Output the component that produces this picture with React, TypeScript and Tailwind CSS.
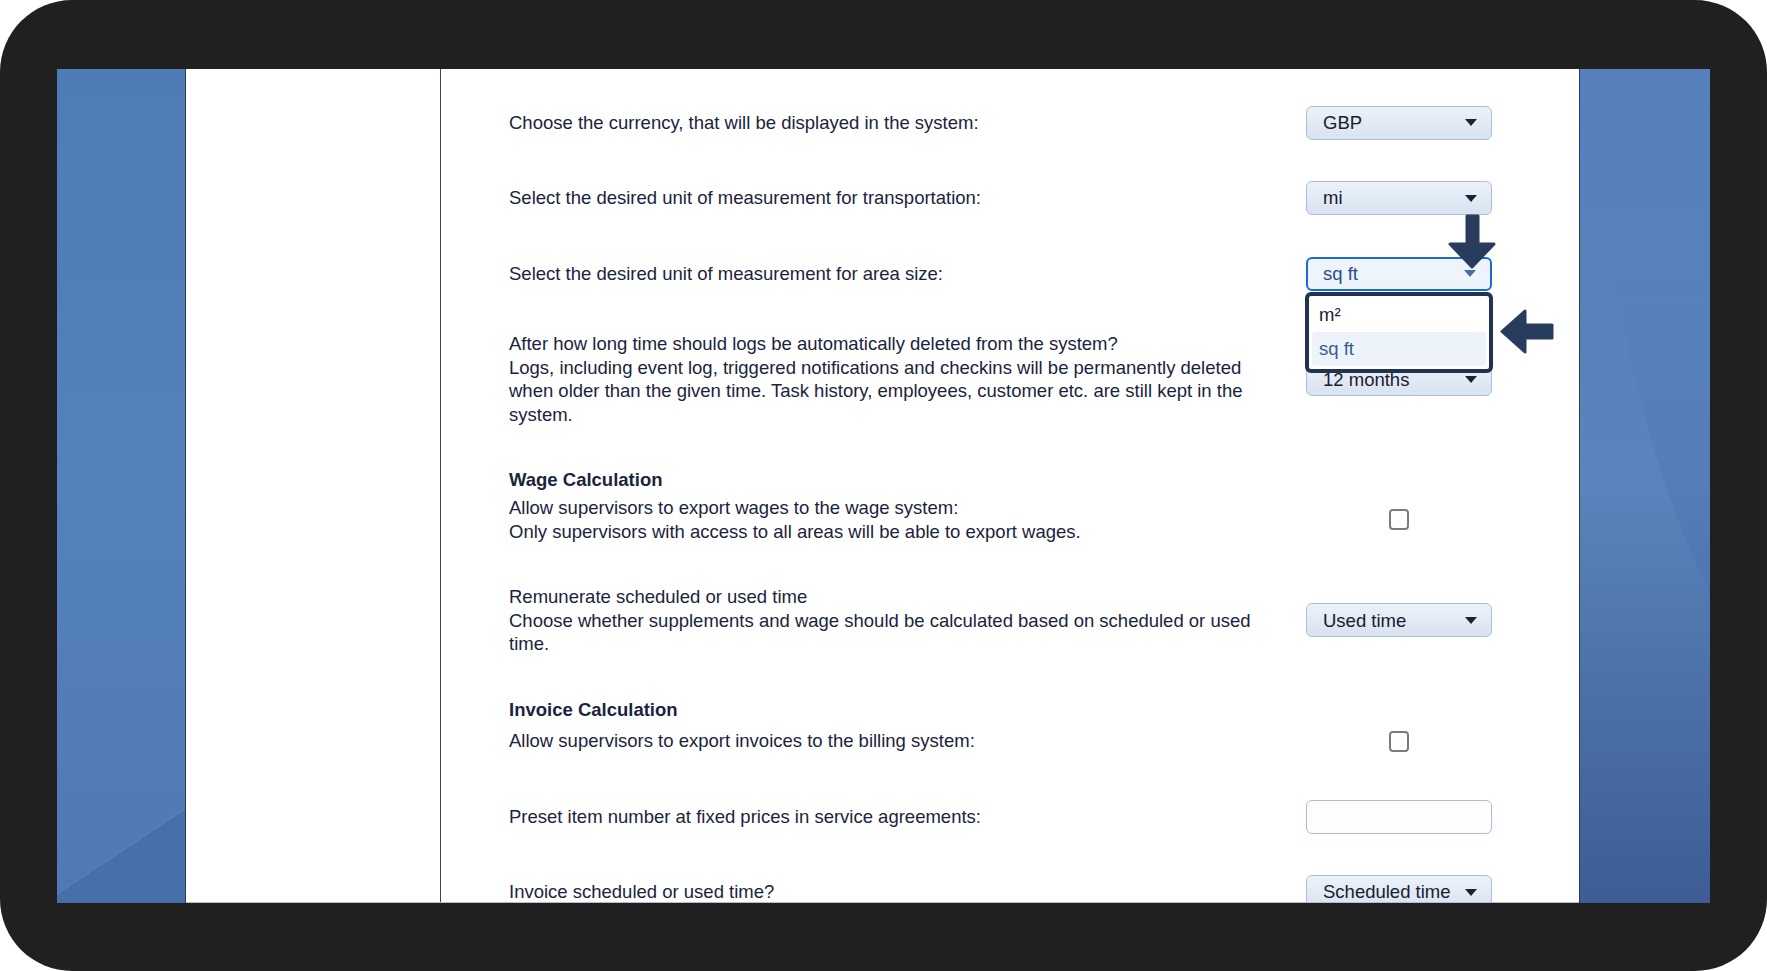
import type { ReactNode } from "react";
import clsx from "clsx";

// Settings form shown inside a tablet-style bezel, with the area-size select opened.

function Caret({ className }: { className: string }) {
  return (
    <svg width="12" height="7" viewBox="0 0 12 7" className={className}>
      <path d="M0 0h12L6 7z" />
    </svg>
  );
}

function Select({ value, focused = false }: { value: string; focused?: boolean }) {
  return (
    <div
      className={clsx(
        "flex h-[34px] w-[186px] shrink-0 items-center justify-between whitespace-nowrap rounded-[6px] pr-[14px]",
        focused
          ? "border-2 border-[#1d6ad6] bg-[#eef4fc] pl-[15px] text-[#2c4d86]"
          : "border border-[#a8bfe2] bg-linear-to-b from-[#ecf2f9] to-[#d8e3f1] pl-[16px] text-[#18202f]",
      )}
    >
      <span>{value}</span>
      <Caret className={focused ? "fill-[#4d6c9f]" : "fill-[#1b2233]"} />
    </div>
  );
}

function Checkbox() {
  return <span className="block h-[21px] w-[20px] rounded-[4px] border-2 border-[#7b7b7b] bg-white" />;
}

function Row({ label, children }: { label: ReactNode; children: ReactNode }) {
  return (
    <div className="flex min-h-[34px] shrink-0 items-center">
      <div className="w-[757px] shrink-0">{label}</div>
      <div className="ml-[40px] flex w-[186px] shrink-0 justify-center">{children}</div>
    </div>
  );
}

function Section({ title, children, className }: { title: string; children: ReactNode; className?: string }) {
  return (
    <div className={clsx("flex shrink-0 flex-col", className)}>
      <h3 className="font-bold">{title}</h3>
      {children}
    </div>
  );
}

// open list under the area select, plus the two pointer arrows
function AreaSelect() {
  return (
    <div className="relative">
      <Select value="sq ft" focused />
      <svg
        width="48"
        height="55"
        viewBox="0 0 48 55"
        className="absolute left-[142px] top-[-43px] fill-[#283d5d] stroke-[#283d5d]"
      >
        <path d="M19 2H30V30H46L24 53L2 30H19Z" strokeWidth="3" strokeLinejoin="round" />
      </svg>
      <div className="absolute left-[-1px] top-[35px] z-10 flex w-[188px] flex-col rounded-[6px] border-4 border-[#213350] bg-white px-[3px] pb-[3px] pt-[2px]">
        <div className="flex h-[34px] items-center pl-[7px] text-[#18202f]">m²</div>
        <div className="flex h-[34px] items-center rounded-[4px] bg-[#edf3fb] pl-[7px] text-[#3c5b92]">sq ft</div>
      </div>
      <svg
        width="54"
        height="45"
        viewBox="0 0 54 45"
        className="absolute left-[194px] top-[52px] fill-[#283d5d] stroke-[#283d5d]"
      >
        <path d="M2 22.5L25 2V16H52V29H25V43Z" strokeWidth="3" strokeLinejoin="round" />
      </svg>
    </div>
  );
}

export default function App() {
  return (
    <div className="h-[971px] w-[1767px] bg-white">
      <div className="h-full w-full rounded-[72px] bg-[#212021] px-[57px] pb-[68px] pt-[69px]">
        <div className="flex h-full">
          {/* wallpaper strip, left */}
          <div className="relative w-[129px] shrink-0 overflow-hidden border-r border-[#2b3b57] bg-linear-to-b from-[#4f7bb6] via-[#5582bb] to-[#5079b3]">
            <svg className="absolute inset-0 h-full w-full" viewBox="0 0 129 834" preserveAspectRatio="none">
              <path d="M0 825L129 740V834H0Z" fill="#4670aa" />
              <path d="M0 825L129 740" stroke="#6a90c4" strokeWidth="1" opacity="0.6" />
            </svg>
          </div>

          <div className="flex w-[1393px] shrink-0 overflow-hidden border-b border-[#b9bcc2] bg-white">
            <div className="w-[255px] shrink-0 border-r border-[#3b4657]" />
            <div className="flex flex-col gap-[41.5px] pl-[68px] pt-[36.5px] text-[18.5px] leading-[23.7px] text-[#1a243d] [font-family:'Liberation_Sans',Arial,sans-serif]">
              <Row label="Choose the currency, that will be displayed in the system:">
                <Select value="GBP" />
              </Row>
              <Row label="Select the desired unit of measurement for transportation:">
                <Select value="mi" />
              </Row>
              <Row label="Select the desired unit of measurement for area size:">
                <AreaSelect />
              </Row>
              <Row
                label={
                  <>
                    <p>After how long time should logs be automatically deleted from the system?</p>
                    <p>
                      Logs, including event log, triggered notifications and checkins will be permanently deleted
                      when older than the given time. Task history, employees, customer etc. are still kept in the
                      system.
                    </p>
                  </>
                }
              >
                <Select value="12 months" />
              </Row>
              <Section className="gap-[4px]" title="Wage Calculation">
                <Row
                  label={
                    <>
                      <p>Allow supervisors to export wages to the wage system:</p>
                      <p>Only supervisors with access to all areas will be able to export wages.</p>
                    </>
                  }
                >
                  <Checkbox />
                </Row>
              </Section>
              <Row
                label={
                  <>
                    <p>Remunerate scheduled or used time</p>
                    <p>Choose whether supplements and wage should be calculated based on scheduled or used time.</p>
                  </>
                }
              >
                <Select value="Used time" />
              </Row>
              <Section className="gap-[3px]" title="Invoice Calculation">
                <Row label="Allow supervisors to export invoices to the billing system:">
                  <Checkbox />
                </Row>
              </Section>
              <Row label="Preset item number at fixed prices in service agreements:">
                <input
                  type="text"
                  className="h-[34px] w-[186px] rounded-[6px] border border-[#a8bfe2] bg-[#fdfdfe] outline-none"
                />
              </Row>
              <Row label="Invoice scheduled or used time?">
                <Select value="Scheduled time" />
              </Row>
            </div>
          </div>

          {/* wallpaper strip, right */}
          <div className="relative w-[131px] shrink-0 overflow-hidden border-l border-[#2b3b57] bg-linear-to-b from-[#5580bb] via-[#5a84bd] to-[#3d5d94]">
            <svg className="absolute inset-0 h-full w-full" viewBox="0 0 131 834" preserveAspectRatio="none">
              <defs>
                <linearGradient id="swoosh" x1="0" y1="0" x2="0" y2="1">
                  <stop offset="0" stopColor="#4a72ad" stopOpacity="0" />
                  <stop offset="1" stopColor="#4a72ad" stopOpacity="0.5" />
                </linearGradient>
              </defs>
              <path d="M30 180Q60 380 131 525V180Z" fill="url(#swoosh)" />
            </svg>
          </div>
        </div>
      </div>
    </div>
  );
}
